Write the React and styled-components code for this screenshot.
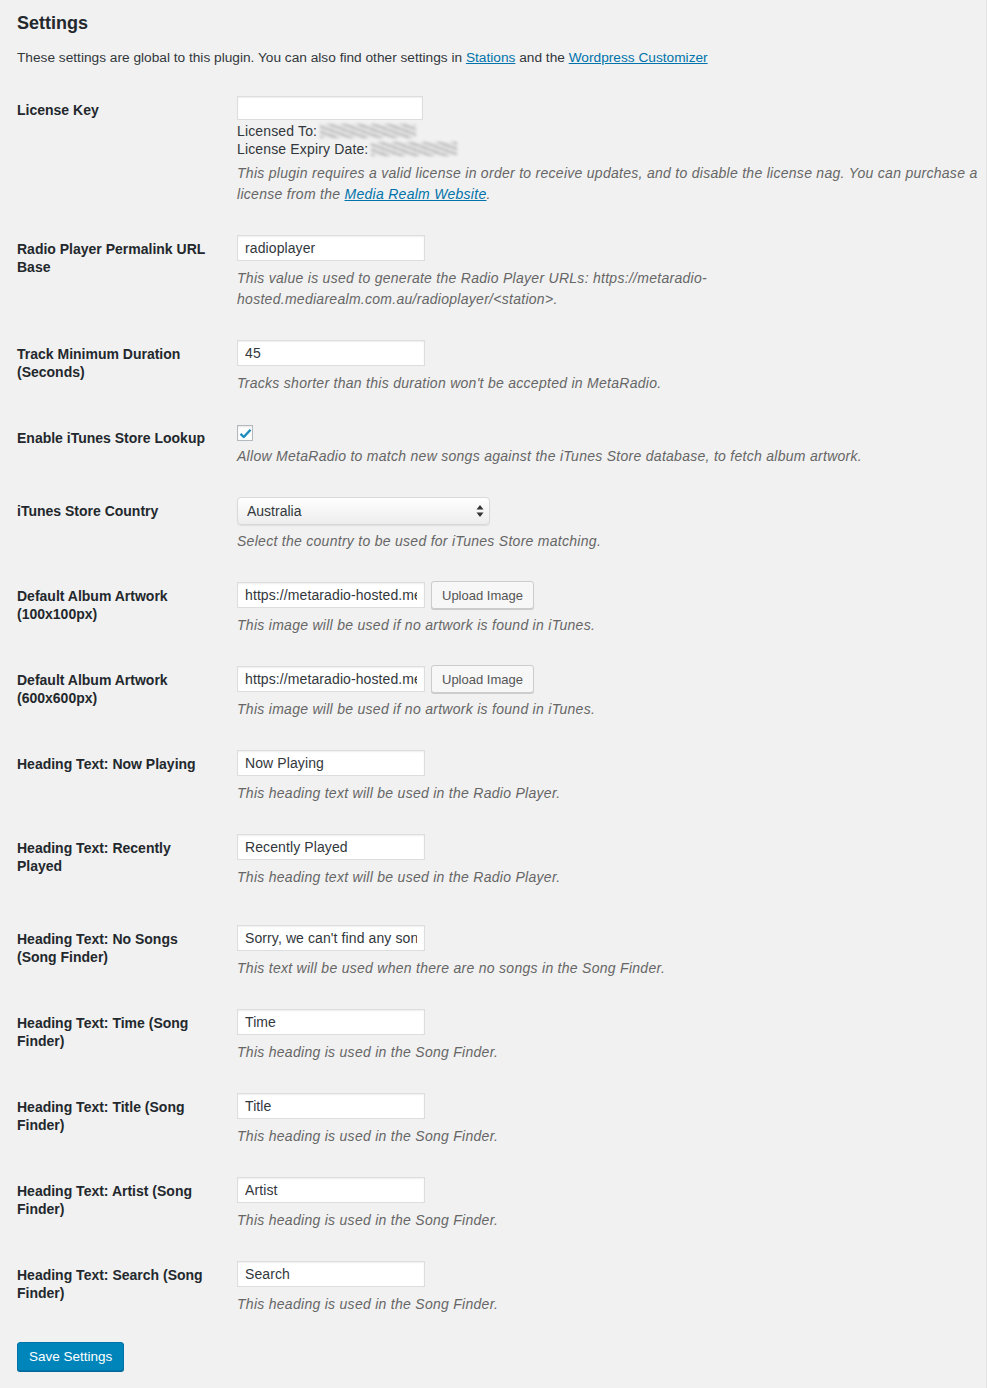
import React from "react";
import styled, { createGlobalStyle } from "styled-components";

const GlobalStyle = createGlobalStyle`
  html, body {
    margin: 0;
    padding: 0;
    background: #f1f1f1;
  }
  body {
    font-family: "Liberation Sans", Arial, sans-serif;
    font-size: 13px;
    color: #444;
  }
`;

const Page = styled.div`
  box-sizing: border-box;
  width: 987px;
  min-height: 1388px;
  padding: 9px 0 20px 17px;
  border-right: 1px solid #e3e3e3;
`;

const Title = styled.h2`
  margin: 0;
  font-size: 18px;
  line-height: 28px;
  font-weight: 700;
  color: #23282d;
`;

const Intro = styled.p`
  margin: 11px 0 0;
  font-size: 13.7px;
  line-height: 20px;
  color: #32373c;
`;

const Link = styled.a`
  color: #0073aa;
  text-decoration: underline;
`;

const FormTable = styled.table`
  width: 100%;
  margin-top: 14px;
  border-collapse: collapse;
`;

const Row = styled.tr``;

const Label = styled.th`
  width: 200px;
  padding: 19px 20px 16px 0;
  vertical-align: top;
  text-align: left;
  font-size: 14px;
  line-height: 18px;
  font-weight: 700;
  color: #23282d;
`;

const Field = styled.td`
  padding: 14px 6px ${(p) => 16 + (p.$extra || 0)}px 0;
  vertical-align: top;
`;

const TextInput = styled.input`
  box-sizing: border-box;
  display: block;
  flex: none;
  width: ${(p) => p.$width || 188}px;
  height: ${(p) => p.$height || 26}px;
  margin: 0;
  padding: 0 7px;
  border: 1px solid #ddd;
  box-shadow: inset 0 1px 2px rgba(0, 0, 0, 0.07);
  background: #fff;
  font-family: inherit;
  font-size: 14px;
  letter-spacing: 0.1px;
  color: #32373c;
  outline: none;
`;

const InlineGroup = styled.div`
  display: flex;
  align-items: center;
  gap: 6px;
  height: 26px;
`;

const SecondaryButton = styled.button`
  box-sizing: border-box;
  flex: none;
  height: 28px;
  padding: 0 10px;
  border: 1px solid #ccc;
  border-radius: 3px;
  background: #f7f7f7;
  box-shadow: 0 1px 0 #ccc;
  font-family: inherit;
  font-size: 13px;
  color: #555;
  cursor: pointer;
`;

const Description = styled.p`
  margin: ${(p) => p.$gap ?? 7}px 0 0;
  font-size: 14px;
  line-height: 21px;
  letter-spacing: 0.28px;
  font-style: italic;
  color: #666;
`;

const LicenseLines = styled.div`
  margin-top: 2px;
`;

const LicenseLine = styled.div`
  display: flex;
  align-items: center;
  font-size: 14px;
  line-height: 18px;
  letter-spacing: 0.15px;
  color: #32373c;
`;

const Redacted = styled.span`
  display: inline-block;
  width: ${(p) => p.$width}px;
  height: 14px;
  margin-left: 3px;
  background: repeating-linear-gradient(
    20deg,
    rgba(110, 110, 110, 0.6) 0 2px,
    rgba(200, 200, 200, 0.2) 2px 5px
  );
  filter: blur(1.6px);
  opacity: 0.8;
`;

const CheckBox = styled.span`
  box-sizing: border-box;
  display: flex;
  align-items: center;
  justify-content: center;
  width: 16px;
  height: 16px;
  margin-top: 1px;
  border: 1px solid #b4b9be;
  background: #fff;
  box-shadow: inset 0 1px 2px rgba(0, 0, 0, 0.1);
  color: #1e8cbe;
`;

const SelectWrap = styled.div`
  position: relative;
  width: 253px;
`;

const Select = styled.select`
  box-sizing: border-box;
  display: block;
  width: 100%;
  height: 28px;
  padding: 0 24px 0 9px;
  border: 1px solid #d9d9d9;
  border-radius: 4px;
  background: linear-gradient(#ffffff, #ededed);
  box-shadow: 0 1px 1px rgba(0, 0, 0, 0.08);
  appearance: none;
  font-family: inherit;
  font-size: 14px;
  color: #32373c;
  outline: none;
`;

const SelectArrows = styled.svg`
  position: absolute;
  right: 6px;
  top: 8px;
  pointer-events: none;
`;

const PrimaryButton = styled.button`
  box-sizing: border-box;
  height: 29px;
  margin-top: 11px;
  padding: 0 11px;
  border: 1px solid #0073aa;
  border-radius: 3px;
  background: #0085ba;
  box-shadow: 0 1px 0 #006799;
  font-family: inherit;
  font-size: 13.5px;
  color: #fff;
  cursor: pointer;
`;

const textRows = [
  {
    label: "Heading Text: Now Playing",
    value: "Now Playing",
    help: "This heading text will be used in the Radio Player.",
  },
  {
    label: "Heading Text: Recently Played",
    value: "Recently Played",
    help: "This heading text will be used in the Radio Player.",
    extra: 7,
  },
  {
    label: "Heading Text: No Songs (Song Finder)",
    value: "Sorry, we can't find any songs",
    help: "This text will be used when there are no songs in the Song Finder.",
  },
  {
    label: "Heading Text: Time (Song Finder)",
    value: "Time",
    help: "This heading is used in the Song Finder.",
  },
  {
    label: "Heading Text: Title (Song Finder)",
    value: "Title",
    help: "This heading is used in the Song Finder.",
  },
  {
    label: "Heading Text: Artist (Song Finder)",
    value: "Artist",
    help: "This heading is used in the Song Finder.",
  },
  {
    label: "Heading Text: Search (Song Finder)",
    value: "Search",
    help: "This heading is used in the Song Finder.",
  },
];

const artworkRows = [
  "Default Album Artwork (100x100px)",
  "Default Album Artwork (600x600px)",
];

const App = () => {
  return (
    <Page>
      <GlobalStyle />
      <Title>Settings</Title>
      <Intro>
        These settings are global to this plugin. You can also find other
        settings in <Link href="#">Stations</Link> and the{" "}
        <Link href="#">Wordpress Customizer</Link>
      </Intro>

      <FormTable>
        <tbody>
          <Row>
            <Label>License Key</Label>
            <Field>
              <TextInput $width={186} $height={24} defaultValue="" />
              <LicenseLines>
                <LicenseLine>
                  Licensed To: <Redacted $width={96} />
                </LicenseLine>
                <LicenseLine>
                  License Expiry Date: <Redacted $width={86} />
                </LicenseLine>
              </LicenseLines>
              <Description $gap={5}>
                This plugin requires a valid license in order to receive
                updates, and to disable the license nag. You can purchase a
                license from the <Link href="#">Media Realm Website</Link>.
              </Description>
            </Field>
          </Row>

          <Row>
            <Label>Radio Player Permalink URL Base</Label>
            <Field>
              <TextInput defaultValue="radioplayer" />
              <Description>
                This value is used to generate the Radio Player URLs:
                https://metaradio-hosted.mediarealm.com.au/radioplayer/&lt;station&gt;.
              </Description>
            </Field>
          </Row>

          <Row>
            <Label>Track Minimum Duration (Seconds)</Label>
            <Field>
              <TextInput defaultValue="45" />
              <Description>
                Tracks shorter than this duration won't be accepted in
                MetaRadio.
              </Description>
            </Field>
          </Row>

          <Row>
            <Label>Enable iTunes Store Lookup</Label>
            <Field>
              <CheckBox>
                <svg width="13" height="11" viewBox="0 0 13 11">
                  <path
                    d="M1.5 5.8 L4.8 9 L11.5 1.8"
                    fill="none"
                    stroke="currentColor"
                    strokeWidth="2.4"
                    strokeLinejoin="round"
                  />
                </svg>
              </CheckBox>
              <Description $gap={5}>
                Allow MetaRadio to match new songs against the iTunes Store
                database, to fetch album artwork.
              </Description>
            </Field>
          </Row>

          <Row>
            <Label>iTunes Store Country</Label>
            <Field>
              <SelectWrap>
                <Select defaultValue="AU">
                  <option value="AU">Australia</option>
                </Select>
                <SelectArrows width="8" height="12" viewBox="0 0 8 12">
                  <path d="M4 0 L7.5 4.5 H0.5 Z" fill="#333" />
                  <path d="M4 12 L7.5 7.5 H0.5 Z" fill="#333" />
                </SelectArrows>
              </SelectWrap>
              <Description $gap={6}>
                Select the country to be used for iTunes Store matching.
              </Description>
            </Field>
          </Row>

          {artworkRows.map((label) => (
            <Row key={label}>
              <Label>{label}</Label>
              <Field>
                <InlineGroup>
                  <TextInput defaultValue="https://metaradio-hosted.mediarealm.com.au/default.jpg" />
                  <SecondaryButton type="button">Upload Image</SecondaryButton>
                </InlineGroup>
                <Description>
                  This image will be used if no artwork is found in iTunes.
                </Description>
              </Field>
            </Row>
          ))}

          {textRows.map((row) => (
            <Row key={row.label}>
              <Label>{row.label}</Label>
              <Field $extra={row.extra}>
                <TextInput defaultValue={row.value} />
                <Description>{row.help}</Description>
              </Field>
            </Row>
          ))}
        </tbody>
      </FormTable>

      <PrimaryButton type="button">Save Settings</PrimaryButton>
    </Page>
  );
};

export default App;
